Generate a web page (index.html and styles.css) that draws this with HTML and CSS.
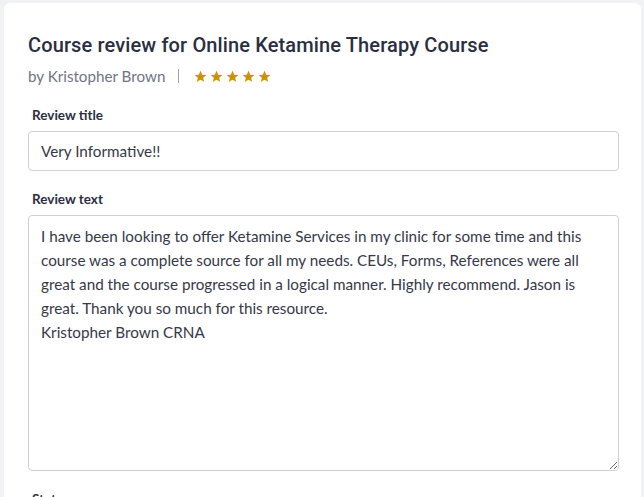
FILE: index.html
```html
<!DOCTYPE html>
<html lang="en">
<head>
<meta charset="utf-8">
<title>Course review</title>
<link rel="stylesheet" href="styles.css">
</head>
<body>
<div class="card">
  <h1 class="title">Course review for Online Ketamine Therapy Course</h1>
  <div class="meta">
    <span class="author">by Kristopher Brown</span>
    <span class="sep"></span>
    <span class="stars">
      <svg class="star" viewBox="0 0 24 24"><path d="M12 1.5l3.1 7.1 7.6.7-5.8 5 1.8 7.5L12 17.8l-6.7 4 1.8-7.5-5.8-5 7.6-.7z"/></svg>
      <svg class="star" viewBox="0 0 24 24"><path d="M12 1.5l3.1 7.1 7.6.7-5.8 5 1.8 7.5L12 17.8l-6.7 4 1.8-7.5-5.8-5 7.6-.7z"/></svg>
      <svg class="star" viewBox="0 0 24 24"><path d="M12 1.5l3.1 7.1 7.6.7-5.8 5 1.8 7.5L12 17.8l-6.7 4 1.8-7.5-5.8-5 7.6-.7z"/></svg>
      <svg class="star" viewBox="0 0 24 24"><path d="M12 1.5l3.1 7.1 7.6.7-5.8 5 1.8 7.5L12 17.8l-6.7 4 1.8-7.5-5.8-5 7.6-.7z"/></svg>
      <svg class="star" viewBox="0 0 24 24"><path d="M12 1.5l3.1 7.1 7.6.7-5.8 5 1.8 7.5L12 17.8l-6.7 4 1.8-7.5-5.8-5 7.6-.7z"/></svg>
    </span>
  </div>
  <label class="label label-first" for="rtitle">Review title</label>
  <input class="field" id="rtitle" type="text" value="Very Informative!!">
  <label class="label" for="rtext">Review text</label>
  <textarea class="field area" id="rtext">I have been looking to offer Ketamine Services in my clinic for some time and this course was a complete source for all my needs. CEUs, Forms, References were all great and the course progressed in a logical manner. Highly recommend. Jason is great. Thank you so much for this resource.
Kristopher Brown CRNA</textarea>
  <label class="label">Status</label>
</div>
</body>
</html>
```
FILE: styles.css
```css
html, body {
  margin: 0;
  padding: 0;
  background: #f1f2f4;
}
body {
  padding: 3px 3px 0 4px;
  font-family: Lato, "Liberation Sans", sans-serif;
  color: #2f3244;
  overflow: hidden;
}
.card {
  background: #ffffff;
  border-radius: 6px 6px 0 0;
  padding: 28px 22px 40px 24px;
  display: flex;
  flex-direction: column;
}
.title {
  margin: 0;
  font-family: Roboto, "Liberation Sans", sans-serif;
  font-weight: 500;
  font-size: 20px;
  line-height: 28px;
  letter-spacing: 0.13px;
  color: #2b2e3f;
}
.meta {
  margin-top: 5px;
  display: flex;
  align-items: center;
  height: 24px;
}
.author {
  font-size: 15.2px;
  line-height: 24px;
  color: #6f7386;
}
.sep {
  width: 1px;
  height: 14px;
  background: #9c9eb4;
  margin: 0 15px 0 13px;
}
.stars {
  display: flex;
  gap: 3px;
}
.star {
  width: 13px;
  height: 13px;
  fill: #c99406;
}
.label {
  display: block;
  font-size: 13.5px;
  line-height: 18px;
  font-weight: 700;
  color: #2b2e3f;
  padding-left: 4px;
  margin-top: 19px;
  margin-bottom: 7px;
}
.label-first {
  margin-top: 18px;
}
.field {
  box-sizing: border-box;
  width: 100%;
  margin: 0;
  border: 1px solid #cfd0d9;
  border-radius: 4px;
  padding: 7px 12px;
  font-family: Lato, "Liberation Sans", sans-serif;
  font-size: 15.25px;
  line-height: 24px;
  color: #353849;
  background: #fff;
  outline: none;
}
.area {
  height: 256px;
  padding-top: 8px;
  resize: vertical;
  display: block;
}
```
